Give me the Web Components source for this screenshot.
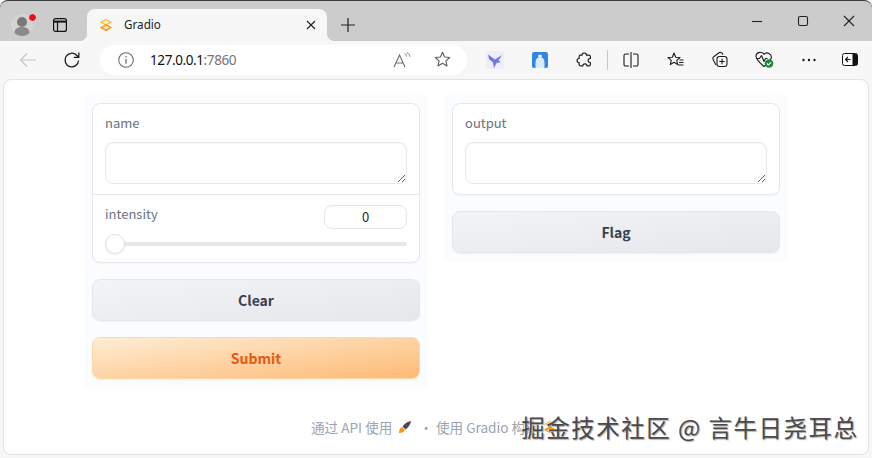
<!DOCTYPE html>
<html lang="zh">
<head>
<meta charset="utf-8">
<title>Gradio</title>
<style>
  html, body { margin: 0; padding: 0; background: #f7f7f7; }
</style>
</head>
<body>
<browser-window>
  <tab-strip slot="tabs" title-text="Gradio"></tab-strip>
  <address-bar slot="toolbar" host-part="127.0.0.1" port-part=":7860"></address-bar>
  <page-view>
    <app-column>
      <form-card>
        <text-field label="name"></text-field>
        <slider-field label="intensity" value="0"></slider-field>
      </form-card>
      <app-button>Clear</app-button>
      <app-button variant="primary">Submit</app-button>
    </app-column>
    <app-column>
      <form-card>
        <text-field label="output"></text-field>
      </form-card>
      <app-button>Flag</app-button>
    </app-column>
    <app-footer slot="footer"></app-footer>
  </page-view>
</browser-window>

<script>
const GRADIO_FONT = `"Noto Sans CJK SC", "Noto Sans", sans-serif`;

class BrowserWindow extends HTMLElement {
	constructor() {
		super();
		this.attachShadow({ mode: "open" });
		this.shadowRoot.innerHTML = `
      <style>
        :host {
          display: flex;
          flex-direction: column;
          width: 872px;
          height: 458px;
          overflow: hidden;
          background: #f7f7f7;
        }
        .main {
          flex: 1;
          min-height: 0;
          display: flex;
          flex-direction: column;
          padding: 0 3px 3px;
        }
      </style>
      <slot name="tabs"></slot>
      <slot name="toolbar"></slot>
      <div class="main"><slot></slot></div>
    `;
	}
}

class TabStrip extends HTMLElement {
	constructor() {
		super();
		this.attachShadow({ mode: "open" });
		this.shadowRoot.innerHTML = `
      <style>
        :host {
          display: flex;
          height: 41px;
          box-sizing: border-box;
          border-top: 1px solid #3a3a3a;
          background: #cccccc;
          border-radius: 8px 8px 0 0;
          font-family: "Noto Sans", sans-serif;
        }
        .profile { position: relative; width: 22px; height: 22px; margin: 13px 0 0 11px; }
        .dot { position: absolute; top: -1px; right: -4px; width: 7px; height: 7px; border-radius: 50%; background: #e0141c; border: 1px solid #e8e8e8; }
        .tabs-btn { width: 16px; height: 16px; margin: 16px 0 0 19px; }
        .tab {
          position: relative;
          width: 240px;
          height: 32px;
          margin: 8px 0 0 19px;
          background: #f7f7f7;
          border-radius: 8px 8px 0 0;
          display: flex;
          align-items: center;
          box-sizing: border-box;
          padding-left: 12px;
        }
        .tab::before, .tab::after {
          content: "";
          position: absolute;
          bottom: 0;
          width: 8px;
          height: 8px;
          background: radial-gradient(circle at 0 0, transparent 8px, #f7f7f7 8.5px);
        }
        .tab::before { left: -8px; }
        .tab::after { right: -8px; background: radial-gradient(circle at 100% 0, transparent 8px, #f7f7f7 8.5px); }
        .fav { width: 14px; height: 14px; }
        .name { margin-left: 11px; font-size: 11.7px; color: #222; flex: 1; padding-bottom: 2px; }
        .close { width: 10px; height: 10px; margin-right: 11px; }
        .plus { width: 14px; height: 14px; margin: 17px 0 0 14px; }
        .spacer { flex: 1; }
        .win { width: 46px; display: flex; justify-content: center; align-items: center; padding-bottom: 1px; height: 40px; }
        .win svg { width: 12px; height: 12px; }
      </style>
      <div class="profile">
        <svg viewBox="0 0 22 22" width="22" height="22">
          <circle cx="11" cy="11" r="11" fill="#d4d4d4"/>
          <circle cx="11" cy="8" r="5" fill="#7a7a7a"/>
          <path d="M3.5 19c0-4.500 3.500-6 7.500-6s7.500 1.500 7.500 6c-2 2-4.500 3-7.500 3s-5.500-1-7.500-3z" fill="#8a8a8a"/>
        </svg>
        <span class="dot"></span>
      </div>
      <svg class="tabs-btn" viewBox="0 0 16 16" fill="none" stroke="#111" stroke-width="1.200">
        <rect x="1.600" y="1.600" width="12.800" height="12.800" rx="2"/>
        <path d="M1.600 4.600h12.800" stroke-width="2"/>
        <path d="M5.500 5v9"/>
      </svg>
      <div class="tab">
        <svg class="fav" viewBox="0 0 14 14">
          <path d="M7 .8 13.200 4.300 7 7.800.8 4.300z" fill="#fbbf46"/>
          <path d="M.8 9.600 7 6.200l6.200 3.400L7 13.200z" fill="#f7931e"/>
          <path d="M3.600 4.300 7 2.400l3.400 1.900L7 6.200z" fill="#fff3d8"/>
          <path d="M3.600 9.600 7 7.800l3.400 1.800L7 11.500z" fill="#ffe3b0"/>
        </svg>
        <span class="name">${this.getAttribute("title-text") || ""}</span>
        <svg class="close" viewBox="0 0 10 10" stroke="#222" stroke-width="1.200"><path d="M1 1l8 8M9 1l-8 8"/></svg>
      </div>
      <svg class="plus" viewBox="0 0 14 14" stroke="#222" stroke-width="1.200"><path d="M7 0v14M0 7h14"/></svg>
      <span class="spacer"></span>
      <span class="win"><svg viewBox="0 0 12 12" stroke="#222" stroke-width="1.100"><path d="M1 6.500h10"/></svg></span>
      <span class="win"><svg viewBox="0 0 12 12" fill="none" stroke="#222" stroke-width="1.100"><rect x="1.500" y="1.500" width="9" height="9" rx="1.500"/></svg></span>
      <span class="win"><svg viewBox="0 0 12 12" stroke="#222" stroke-width="1.100"><path d="M1 1l10 10M11 1 1 11"/></svg></span>
    `;
	}
}

class AddressBar extends HTMLElement {
	constructor() {
		super();
		this.attachShadow({ mode: "open" });
		this.shadowRoot.innerHTML = `
      <style>
        :host {
          display: flex;
          align-items: center;
          height: 38px;
          background: #f7f7f7;
          font-family: "Noto Sans", sans-serif;
          box-sizing: border-box;
          padding: 0 0 1px 6px;
        }
        .nav { width: 44px; display: flex; justify-content: center; }
        svg { display: block; }
        .omni {
          width: 367px;
          height: 30px;
          margin-left: 6px;
          background: #fff;
          border-radius: 15px;
          display: flex;
          align-items: center;
          box-sizing: border-box;
          padding-left: 18px;
        }
        .url { margin-left: 16px; font-size: 13.500px; color: #111; flex: 1; letter-spacing: -.4px; }
        .url span { color: #767676; }
        .read { margin-right: 23px; }
        .star { margin-right: 16px; }
        .tools { display: flex; align-items: center; margin-left: 6px; }
        .slot { width: 44.500px; display: flex; justify-content: center; }
        .sep { width: 1px; height: 20px; background: #c9c9c9; margin: 0 1px 0 0; }
      </style>
      <div class="nav">
        <svg width="18" height="16" viewBox="0 0 18 16" fill="none" stroke="#c4c4c4" stroke-width="1.200"><path d="M17 8H1.500M8 1.500 1.500 8 8 14.500"/></svg>
      </div>
      <div class="nav">
        <svg width="18" height="18" viewBox="0 0 18 18" fill="none" stroke="#1c1c1c" stroke-width="1.300"><path d="M15.600 9.500a6.800 6.800 0 1 1-2-5.300l2 2"/><path d="M15.800 1.500v4.900h-4.900"/></svg>
      </div>
      <div class="omni">
        <svg width="16" height="16" viewBox="0 0 16 16" fill="none" stroke="#6e6e6e" stroke-width="1.100"><circle cx="8" cy="8" r="7.300"/><path d="M8 7v4.800" stroke-width="1.300"/><circle cx="8" cy="4.700" r=".8" fill="#6e6e6e" stroke="none"/></svg>
        <span class="url">${this.getAttribute("host-part")}<span>${this.getAttribute("port-part")}</span></span>
        <svg class="read" width="18" height="16" viewBox="0 0 18 16" fill="none" stroke="#6a6a6a" stroke-width="1.100"><path d="M1 15 6.500 3 12 15M2.800 11h7.400"/><path d="M11.500 1.500c1.300.6 2 1.600 2.200 3M13.800.5c1.800.9 2.800 2.300 3 4.200" stroke-width=".9"/></svg>
        <svg class="star" width="17" height="17" viewBox="0 0 17 17" fill="none" stroke="#5a5a5a" stroke-width="1.100"><path d="M8.500 1.300 10.600 6l5.100.5-3.800 3.400 1.100 5-4.500-2.600L4 14.900l1.100-5L1.300 6.500 6.400 6z" stroke-linejoin="round"/></svg>
      </div>
      <div class="tools">
        <div class="slot">
          <svg width="18" height="18" viewBox="0 0 18 18"><rect width="18" height="18" fill="#efedfb"/><path d="M2 3.500 9 8.500 16 4 12.500 9.500 15 11 10.500 12 8 17 7 11.500 3 8z" fill="#6f76e8"/></svg>
        </div>
        <div class="slot">
          <svg width="16" height="16" viewBox="0 0 16 16"><rect width="16" height="16" rx="2" fill="#2f86e6"/><path d="M3.500 16v-6a4.500 5 0 0 1 9 0v6z" fill="#dcebfa"/><rect x="6.300" y="2.800" width="3.400" height="2.200" fill="#fff"/></svg>
        </div>
        <div class="slot">
          <svg width="16" height="16" viewBox="0 0 16 16" fill="none" stroke="#1c1c1c" stroke-width="1.200" stroke-linejoin="round"><path d="M6 3.200c0-3 4.500-2.800 4.500 0h2.400a1.500 1.500 0 0 1 1.500 1.500v1.800c-2.900-.3-3 4.300 0 4v1.800a1.500 1.500 0 0 1-1.500 1.500h-2c.3-2.600-4.200-2.700-4 0H4.600a1.500 1.500 0 0 1-1.500-1.500v-1.600c-2.700 0-2.700-4.200 0-4.200V4.700a1.500 1.500 0 0 1 1.500-1.500z"/></svg>
        </div>
        <span class="sep"></span>
        <div class="slot">
          <svg width="16" height="16" viewBox="0 0 16 16" fill="none" stroke="#1c1c1c" stroke-width="1.100"><path d="M6 2H2.500A1.500 1.500 0 0 0 1 3.500v9A1.500 1.500 0 0 0 2.500 14H6M10 2h3.500A1.500 1.500 0 0 1 15 3.500v9a1.500 1.500 0 0 1-1.500 1.500H10M8 0v16"/></svg>
        </div>
        <div class="slot">
          <svg width="17" height="16" viewBox="0 0 17 16" fill="none" stroke="#1c1c1c" stroke-width="1.100" stroke-linejoin="round"><path d="M7 1 8.700 5.200l4.300.3-3.300 2.800 1 4.300L7 10.300 3.300 12.600l1-4.300L1 5.500l4.300-.3z"/><path d="M12.500 8h4M12 10.500h4.500M11 13h5.500" /></svg>
        </div>
        <div class="slot">
          <svg width="17" height="17" viewBox="0 0 17 17" fill="none" stroke="#1c1c1c" stroke-width="1.100" stroke-linejoin="round"><path d="M5 14 2.300 9A2.500 2.500 0 0 1 3 5.500L8 1.800c1.200-.8 2.800-.4 3.500.8l.5 1.200"/><rect x="6" y="5.500" width="10" height="10" rx="2.500"/><path d="M11 7.800v5.400M8.300 10.500h5.400"/></svg>
        </div>
        <div class="slot">
          <svg width="19" height="17" viewBox="0 0 19 17" fill="none" stroke="#1c1c1c" stroke-width="1.100" stroke-linejoin="round"><path d="M9 3.300C7 .2 1.500.8 1 5c-.2 3 4 7 8 10.500 3-2.500 6.500-6 7.300-8.500.8-4-4.800-6.700-7.300-3.700z"/><path d="M1.500 7.500h3l2-3 2.500 6 1.500-3h2"/><circle cx="14" cy="12.500" r="4.300" fill="#1d8a3a" stroke="none"/><path d="M12 12.500l1.500 1.500 2.500-2.700" stroke="#fff" stroke-width="1.100"/></svg>
        </div>
        <div class="slot">
          <svg width="14" height="4" viewBox="0 0 14 4" fill="#1c1c1c"><circle cx="1.500" cy="2" r="1.200"/><circle cx="7" cy="2" r="1.200"/><circle cx="12.500" cy="2" r="1.200"/></svg>
        </div>
        <div class="slot" style="width:38px">
          <svg width="16" height="13" viewBox="0 0 16 13"><rect x=".5" y=".5" width="15" height="12" rx="2" fill="#fff" stroke="#111"/><path d="M10.500 1h3.500a1.500 1.500 0 0 1 1.500 1.500v8a1.500 1.500 0 0 1-1.500 1.500h-3.500z" fill="#111"/><path d="M8.500 6.500H3.500M6 4 3.500 6.500 6 9" stroke="#111" stroke-width="1.100" fill="none"/></svg>
        </div>
      </div>
    `;
	}
}

class PageView extends HTMLElement {
	constructor() {
		super();
		this.attachShadow({ mode: "open" });
		this.shadowRoot.innerHTML = `
      <style>
        :host {
          display: flex;
          flex-direction: column;
          flex: 1;
          min-height: 0;
          position: relative;
          box-sizing: border-box;
          background: #fff;
          border: 1px solid #e2e2e2;
          border-radius: 8px;
          font-family: ${GRADIO_FONT};
        }
        .row {
          display: flex;
          align-items: flex-start;
          gap: 16px;
          padding: 15px 80px 0;
        }
      </style>
      <div class="row"><slot></slot></div>
      <slot name="footer"></slot>
    `;
	}
}

class AppColumn extends HTMLElement {
	constructor() {
		super();
		this.attachShadow({ mode: "open" });
		this.shadowRoot.innerHTML = `
      <style>
        :host {
          display: flex;
          flex-direction: column;
          gap: 16px;
          width: 344px;
          box-sizing: border-box;
          padding: 8px 8px 9px;
          background: #fbfcfe;
          border-radius: 4px;
        }
      </style>
      <slot></slot>
    `;
	}
}

class FormCard extends HTMLElement {
	constructor() {
		super();
		this.attachShadow({ mode: "open" });
		this.shadowRoot.innerHTML = `
      <style>
        :host {
          display: block;
          background: #fff;
          border: 1px solid #e5e7eb;
          border-radius: 8px;
          box-shadow: 0 1px 2px rgba(0, 0, 0, .03);
        }
        ::slotted(*:not(:last-child)) { border-bottom: 1px solid #e5e7eb; }
      </style>
      <slot></slot>
    `;
	}
}

class TextField extends HTMLElement {
	constructor() {
		super();
		this.attachShadow({ mode: "open" });
		this.shadowRoot.innerHTML = `
      <style>
        :host { display: block; padding: 9px 12px 10px; }
        .label { display: block; font-size: 13px; line-height: 20px; color: #6b7280; margin-bottom: 9px; }
        textarea {
          display: block;
          box-sizing: border-box;
          width: 100%;
          height: 42px;
          margin: 0;
          padding: 8px 12px;
          border: 1px solid #e5e7eb;
          border-radius: 8px;
          background: #fff;
          box-shadow: inset 0 1px 2px rgba(0, 0, 0, .04);
          outline: none;
        }
      </style>
      <span class="label">${this.getAttribute("label")}</span>
      <textarea></textarea>
    `;
	}
}

class SliderField extends HTMLElement {
	constructor() {
		super();
		this.attachShadow({ mode: "open" });
		this.shadowRoot.innerHTML = `
      <style>
        :host { display: block; padding: 10px 12px 8px; }
        .head { display: flex; justify-content: space-between; align-items: flex-start; height: 29px; }
        .label { font-size: 13px; line-height: 20px; color: #6b7280; margin-top: -1px; }
        .num {
          box-sizing: border-box;
          width: 83px;
          height: 24px;
          border: 1px solid #e5e7eb;
          border-radius: 8px;
          font-size: 13px;
          line-height: 22px;
          text-align: center;
          color: #1f2937;
          box-shadow: inset 0 1px 2px rgba(0, 0, 0, .03);
        }
        input {
          -webkit-appearance: none;
          appearance: none;
          display: block;
          width: 100%;
          height: 20px;
          margin: 0;
          background: transparent;
        }
        input::-webkit-slider-runnable-track { height: 4px; background: #e5e7eb; border-radius: 2px; }
        input::-webkit-slider-thumb {
          -webkit-appearance: none;
          box-sizing: border-box;
          width: 20px;
          height: 20px;
          margin-top: -8px;
          border-radius: 50%;
          background: #fff;
          border: 1px solid #dfe1e5;
          box-shadow: 0 1px 2px rgba(0, 0, 0, .08);
        }
      </style>
      <div class="head">
        <span class="label">${this.getAttribute("label")}</span>
        <span class="num">${this.getAttribute("value")}</span>
      </div>
      <input type="range" min="0" max="100" value="${this.getAttribute("value")}">
    `;
	}
}

class AppButton extends HTMLElement {
	constructor() {
		super();
		this.attachShadow({ mode: "open" });
		this.shadowRoot.innerHTML = `
      <style>
        :host {
          display: flex;
          justify-content: center;
          align-items: center;
          box-sizing: border-box;
          height: 42px;
          border: 1px solid #e5e7eb;
          border-radius: 8px;
          background: linear-gradient(to bottom right, #f3f4f6, #e5e7eb);
          color: #374151;
          font-size: 14px;
          font-weight: 600;
          box-shadow: 0 1px 2px rgba(0, 0, 0, .05);
        }
        :host([variant="primary"]) {
          border-color: #fed7aa;
          background: linear-gradient(to bottom right, #ffedd5, #fdba74);
          color: #ea580c;
        }
      </style>
      <span><slot></slot></span>
    `;
	}
}

class AppFooter extends HTMLElement {
	constructor() {
		super();
		this.attachShadow({ mode: "open" });
		this.shadowRoot.innerHTML = `
      <style>
        :host {
          display: flex;
          align-items: center;
          justify-content: flex-start;
          margin-top: auto;
          height: 20px;
          margin-bottom: 17px;
          padding-left: 307px;
          font-size: 13.600px;
          color: #9ca3af;
          white-space: nowrap;
        }
        .rocket { margin: 0 0 0 6px; }
        .dot { margin: 0 3px 0 7px; }
        .logo { margin-left: 4px; }
        .mark {
          position: absolute;
          right: 11px;
          bottom: 12px;
          font-size: 23.500px;
          line-height: 30px;
          color: #4a4a4a;
          letter-spacing: 1.500px;
          margin-right: -1.500px;
          text-shadow: 1px 1px 1px #aaa, -1px 0 0 #fff;
        }
      </style>
      <span>通过 API 使用</span>
      <svg class="rocket" width="14" height="14" viewBox="0 0 14 14">
        <path d="M1 13c0-3 1-5 3-6l3 3c-1 2-3 3-6 3z" fill="#f7941e"/>
        <path d="M4.500 6.500C6.500 3.500 9.500 1.500 13 1c-.5 3.500-2.500 6.500-5.500 8.500z" fill="#4a4a4a"/>
      </svg>
      <span class="dot">·</span>
      <span>使用 Gradio 构建</span>
      <svg class="logo" width="14" height="14" viewBox="0 0 14 14">
        <path d="M7 .8 13.200 4.300 7 7.800.8 4.300z" fill="#fbbf46"/>
        <path d="M.8 9.600 7 6.200l6.200 3.400L7 13.200z" fill="#f7931e"/>
      </svg>
      <span class="mark">掘金技术社区 @ 言牛日尧耳总</span>
    `;
	}
}

customElements.define("browser-window", BrowserWindow);
customElements.define("tab-strip", TabStrip);
customElements.define("address-bar", AddressBar);
customElements.define("page-view", PageView);
customElements.define("app-column", AppColumn);
customElements.define("form-card", FormCard);
customElements.define("text-field", TextField);
customElements.define("slider-field", SliderField);
customElements.define("app-button", AppButton);
customElements.define("app-footer", AppFooter);
</script>
</body>
</html>
